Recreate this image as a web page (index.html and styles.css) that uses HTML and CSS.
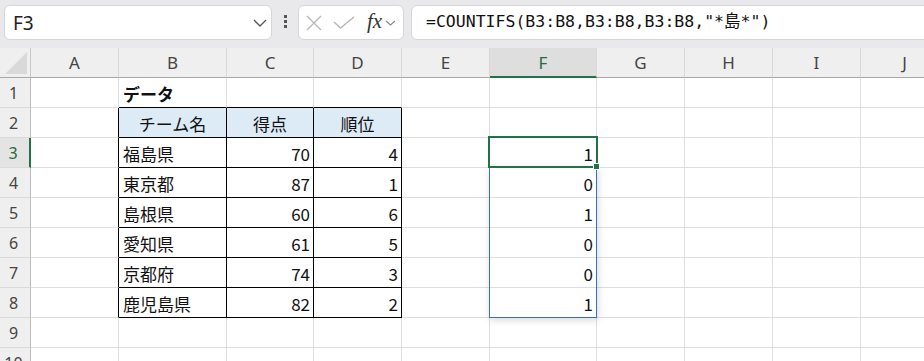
FILE: index.html
```html
<!DOCTYPE html>
<html>
<head>
  <meta charset="UTF-8">
  <title>COUNTIFS</title>
  <link rel="stylesheet" href="styles.css">
</head>
<body>

<div class="toolbar">
  <div class="namebox">
    <span class="namebox__text">F3</span>
    <svg class="chev" width="14" height="8" viewBox="0 0 14 8"><path d="M1 1 L7 7 L13 1" fill="none" stroke="#555" stroke-width="1.3"/></svg>
  </div>
  <div class="dots"><i></i><i></i><i></i></div>
  <div class="fxbox">
    <svg width="16" height="16" viewBox="0 0 16 16"><path d="M1 1 L15 15 M15 1 L1 15" stroke="#b8b8b8" stroke-width="1.4" fill="none"/></svg>
    <svg width="22" height="13" viewBox="0 0 22 13"><path d="M1 6 L7.5 12 L21 1" stroke="#b8b8b8" stroke-width="1.4" fill="none"/></svg>
    <span class="fx">fx</span>
    <svg width="11" height="6" viewBox="0 0 11 6"><path d="M1 1 L5.5 5 L10 1" stroke="#888" stroke-width="1.1" fill="none"/></svg>
  </div>
  <div class="formula">=COUNTIFS(B3:B8,B3:B8,B3:B8,"*島*")</div>
</div>

<div class="sheet">
  <div class="corner"><span class="corner__tri"></span></div>
  <div class="ch">A</div><div class="ch">B</div><div class="ch">C</div><div class="ch">D</div><div class="ch">E</div>
  <div class="ch ch--sel">F</div><div class="ch">G</div><div class="ch">H</div><div class="ch">I</div><div class="ch">J</div>

  <div class="rh">1</div><div class="c"></div><div class="c tt bold">データ</div><div class="c tt"></div><div class="c tt"></div>
  <div class="c"></div><div class="c"></div><div class="c"></div><div class="c"></div><div class="c"></div><div class="c"></div>

  <div class="rh">2</div><div class="c tl"></div><div class="c t th">チーム名</div><div class="c t th">得点</div><div class="c t th">順位</div>
  <div class="c"></div><div class="c"></div><div class="c"></div><div class="c"></div><div class="c"></div><div class="c"></div>

  <div class="rh rh--sel">3</div><div class="c tl"></div><div class="c t">福島県</div><div class="c t num">70</div><div class="c t num">4</div>
  <div class="c"></div><div class="c num">1</div><div class="c"></div><div class="c"></div><div class="c"></div><div class="c"></div>

  <div class="rh">4</div><div class="c tl"></div><div class="c t">東京都</div><div class="c t num">87</div><div class="c t num">1</div>
  <div class="c"></div><div class="c num">0</div><div class="c"></div><div class="c"></div><div class="c"></div><div class="c"></div>

  <div class="rh">5</div><div class="c tl"></div><div class="c t">島根県</div><div class="c t num">60</div><div class="c t num">6</div>
  <div class="c"></div><div class="c num">1</div><div class="c"></div><div class="c"></div><div class="c"></div><div class="c"></div>

  <div class="rh">6</div><div class="c tl"></div><div class="c t">愛知県</div><div class="c t num">61</div><div class="c t num">5</div>
  <div class="c"></div><div class="c num">0</div><div class="c"></div><div class="c"></div><div class="c"></div><div class="c"></div>

  <div class="rh">7</div><div class="c tl"></div><div class="c t">京都府</div><div class="c t num">74</div><div class="c t num">3</div>
  <div class="c"></div><div class="c num">0</div><div class="c"></div><div class="c"></div><div class="c"></div><div class="c"></div>

  <div class="rh">8</div><div class="c tl"></div><div class="c t">鹿児島県</div><div class="c t num">82</div><div class="c t num">2</div>
  <div class="c"></div><div class="c num">1</div><div class="c"></div><div class="c"></div><div class="c"></div><div class="c"></div>

  <div class="rh">9</div><div class="c"></div><div class="c"></div><div class="c"></div><div class="c"></div>
  <div class="c"></div><div class="c"></div><div class="c"></div><div class="c"></div><div class="c"></div><div class="c"></div>

  <div class="rh">10</div><div class="c"></div><div class="c"></div><div class="c"></div><div class="c"></div>
  <div class="c"></div><div class="c"></div><div class="c"></div><div class="c"></div><div class="c"></div><div class="c"></div>

  <!-- selection overlays -->
  <div class="range"></div>
  <div class="active"><span class="active__handle"></span></div>
</div>

</body>
</html>
```

FILE: styles.css
```css
html, body {
  margin: 0;
  padding: 0;
}
*, *:before, *:after {
  box-sizing: border-box;
}
body {
  background: #fff;
  overflow: hidden;
  width: 924px;
  height: 361px;
  font-family: "Noto Sans CJK JP", sans-serif;
}

/* formula bar */
.toolbar {
  display: flex;
  align-items: flex-start;
  height: 48px;
  padding: 5px 0 0 4px;
  background: #e9e9ec;
}
.namebox,
.fxbox,
.formula {
  height: 35px;
  background: #fff;
  border: 1px solid #d6d6d8;
  border-radius: 6px;
}
.namebox {
  display: flex;
  align-items: center;
  justify-content: space-between;
  width: 268px;
  padding: 0 4px 0 8px;
}
.namebox__text {
  font-family: "Noto Sans", sans-serif;
  font-size: 19px;
  color: #222;
}
.chev {
  margin-top: 1px;
}
.dots {
  display: flex;
  flex-direction: column;
  align-items: center;
  gap: 2px;
  width: 26px;
  padding-top: 10px;
}
.dots i {
  display: block;
  width: 3px;
  height: 3px;
  background: #555;
}
.fxbox {
  display: flex;
  align-items: center;
  width: 106px;
  padding: 0 0 0 7px;
}
.fxbox svg:nth-child(1) {
  margin-right: 11px;
}
.fxbox svg:nth-child(2) {
  margin-right: 12px;
}
.fx {
  font-family: "Liberation Serif", serif;
  font-style: italic;
  font-size: 21px;
  color: #333;
  margin-right: 3px;
  margin-top: -3px;
}
.formula {
  flex: 1;
  margin-left: 7px;
  margin-right: -20px;
  padding: 3px 0 0 14px;
  font-family: "DejaVu Sans Mono", "Noto Sans CJK JP", monospace;
  font-size: 16.5px;
  line-height: 26px;
  color: #111;
}

/* grid */
.sheet {
  position: relative;
  display: grid;
  grid-template-columns: 31px 88px 108px 87px 88px 88px 107px 88px 88px 88px 88px;
  grid-auto-rows: 30px;
}
.corner,
.ch,
.rh {
  background: #efefef;
  color: #444;
  font-family: "Noto Sans", sans-serif;
}
.corner {
  position: relative;
  border-right: 1px solid #c8c8c8;
  border-bottom: 1px solid #a8a8a8;
}
.corner__tri {
  position: absolute;
  left: 5px;
  top: 4px;
  width: 22px;
  height: 22px;
  background: #d9d9d9;
  clip-path: polygon(100% 0, 100% 100%, 0 100%);
}
.ch {
  display: flex;
  align-items: center;
  justify-content: center;
  font-size: 17px;
  border-right: 1px solid #d8d8d8;
  border-bottom: 1px solid #a8a8a8;
}
.ch--sel {
  background: #dedede;
  color: #1e6b41;
  border-bottom: 2px solid #217346;
}
.rh {
  display: flex;
  align-items: center;
  justify-content: center;
  padding-right: 3px;
  font-size: 16px;
  border-right: 1px solid #bcbcbc;
  border-bottom: 1px solid #dadada;
}
.rh--sel {
  background: #e4e4e4;
  color: #1e6b41;
  border-right: 2px solid #217346;
}
.c {
  display: flex;
  align-items: center;
  padding: 1px 4px 0 4px;
  font-size: 17px;
  color: #111;
  white-space: nowrap;
  border-right: 1px solid #dedede;
  border-bottom: 1px solid #dedede;
}
.bold {
  font-weight: bold;
}
.num {
  justify-content: flex-end;
  padding-right: 3px;
}
.th {
  justify-content: center;
  background: #ddebf7;
}
.t {
  border-right-color: #000;
  border-bottom-color: #000;
}
.tl {
  border-right-color: #000;
}
.tt {
  border-bottom-color: #000;
}

/* selection */
.range {
  position: absolute;
  left: 489px;
  top: 119px;
  width: 108px;
  height: 151px;
  border: 1px solid #3a6fc6;
  box-shadow: 1px 2px 7px rgba(0, 0, 0, .16);
}
.active {
  position: absolute;
  left: 488px;
  top: 88px;
  width: 110px;
  height: 32px;
  border: 2px solid #217346;
}
.active__handle {
  position: absolute;
  right: -4px;
  bottom: -4px;
  width: 7px;
  height: 7px;
  background: #217346;
  border: 1px solid #fff;
}
```
